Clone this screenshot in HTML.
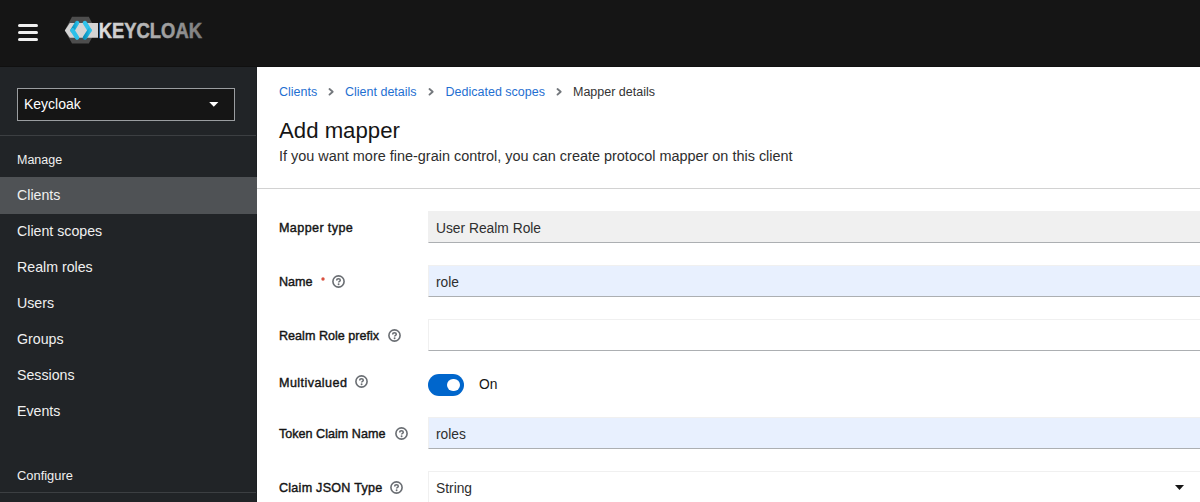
<!DOCTYPE html>
<html><head><meta charset="utf-8">
<style>
*{box-sizing:border-box;margin:0;padding:0}
html,body{width:1200px;height:502px;overflow:hidden;background:#fff;font-family:"Liberation Sans",sans-serif;color:#151515}
.abs{position:absolute;white-space:nowrap}
#hdr{position:absolute;left:0;top:0;width:1200px;height:67px;background:#151515;border-bottom:1px solid #101010}
.bar{position:absolute;left:18px;width:20px;height:3px;border-radius:1.5px;background:#f0f0f0}
#side{position:absolute;left:0;top:67px;width:257px;height:435px;background:#212427;border-right:1px solid #1d2023}
#realm{position:absolute;left:17px;top:88px;width:218px;height:33px;border:1px solid #9a9da0;background:#151515}
.nav{position:absolute;left:17px;color:#f0f0f0;font-size:14.2px}
.sect{position:absolute;left:17px;color:#f0f0f0;font-size:12.5px}
#main{position:absolute;left:257px;top:67px;width:943px;height:435px;background:#fff}
.bc{position:absolute;font-size:12.5px;color:#1f6fd1;top:0}
.lbl{position:absolute;left:279px;font-weight:normal;font-size:12.6px;color:#151515;-webkit-text-stroke:0.4px #151515}
.inp{position:absolute;left:428px;width:800px;height:32px;border:1px solid #f0f0f0;border-bottom-color:#acafb2}
.val{position:absolute;left:436px;font-size:13.8px;color:#2e2e2e}
.help{position:absolute;width:13px;height:13px}
</style></head><body>
<div id="hdr">
  <div class="bar" style="top:24px"></div>
  <div class="bar" style="top:31px"></div>
  <div class="bar" style="top:38px"></div>
  <svg class="abs" style="left:60px;top:10px" width="150" height="40" viewBox="60 10 150 40">
    <defs>
      <linearGradient id="tg" x1="0" x2="1" y1="0" y2="0">
        <stop offset="0" stop-color="#e0e0e0"/>
        <stop offset="1" stop-color="#7c7c7c"/>
      </linearGradient>
      <linearGradient id="cd" x1="-0.2" x2="1.2" y1="0" y2="0"><stop offset="0" stop-color="#0a8db6"/><stop offset="0.5" stop-color="#12a6d2"/><stop offset="1" stop-color="#2ec0ea"/></linearGradient>
    </defs>
    <polygon points="64.8,30.5 72,16.8 88.8,16.8 96,30.5 88.8,43.6 72,43.6" fill="#4d4d4d"/>
    <polygon points="64.8,30.5 69.8,23 98,23 98,37.8 69.8,37.8" fill="#d4d4d4"/>
    <g stroke-linecap="round" stroke-width="4.3" fill="none">
    <path d="M77.1,22.9 L72.5,30.3" stroke="url(#cd)"/>
    <path d="M72.5,30.3 L77.1,37.7" stroke="#2cc0ea"/>
    <path d="M84.9,22.9 L89.6,30.3" stroke="#30c3eb"/>
    <path d="M89.6,30.3 L84.9,37.7" stroke="url(#cd)"/>
    </g>
    <text x="98.7" y="37.5" font-family="Liberation Sans" font-weight="bold" font-size="21.4" textLength="103.3" lengthAdjust="spacingAndGlyphs" fill="url(#tg)" stroke="url(#tg)" stroke-width="0.5">KEYCLOAK</text>
  </svg>
</div>
<div id="side"></div>
<div id="realm"></div>
<div class="abs" style="left:24px;top:96px;color:#fff;font-size:14px">Keycloak</div>
<svg class="abs" style="left:209px;top:101.8px" width="10" height="6" viewBox="0 0 10 6"><polygon points="0.2,0 9.4,0 4.8,4.8" fill="#fff"/></svg>
<div class="abs" style="left:0;top:135px;width:256px;height:1px;background:#3c3f42"></div>
<div class="abs sect" style="top:153px">Manage</div>
<div class="abs" style="left:0;top:177px;width:257px;height:36.6px;background:#4f5255"></div>
<div class="abs nav" style="top:187px">Clients</div>
<div class="abs nav" style="top:223px">Client scopes</div>
<div class="abs nav" style="top:259px">Realm roles</div>
<div class="abs nav" style="top:295px">Users</div>
<div class="abs nav" style="top:331px">Groups</div>
<div class="abs nav" style="top:367px">Sessions</div>
<div class="abs nav" style="top:403px">Events</div>
<div class="abs sect" style="top:467.6px;font-size:12.9px">Configure</div>
<div class="abs" style="left:0;top:492px;width:256px;height:1px;background:#3c3f42"></div>

<div id="main"></div>
<svg class="abs" style="left:327.5px;top:87px" width="7" height="10" viewBox="0 0 7 10"><polyline points="1.5,2.0 4.7,4.7 1.5,7.6" fill="none" stroke="#73777c" stroke-width="1.9" stroke-linecap="round" stroke-linejoin="round"/></svg><svg class="abs" style="left:428.3px;top:87px" width="7" height="10" viewBox="0 0 7 10"><polyline points="1.5,2.0 4.7,4.7 1.5,7.6" fill="none" stroke="#73777c" stroke-width="1.9" stroke-linecap="round" stroke-linejoin="round"/></svg><svg class="abs" style="left:555.5px;top:87px" width="7" height="10" viewBox="0 0 7 10"><polyline points="1.5,2.0 4.7,4.7 1.5,7.6" fill="none" stroke="#73777c" stroke-width="1.9" stroke-linecap="round" stroke-linejoin="round"/></svg>
<div class="abs bc" style="left:279px;top:85px">Clients</div>
<div class="abs bc" style="left:345px;top:85px">Client details</div>
<div class="abs bc" style="left:445.6px;top:85px">Dedicated scopes</div>
<div class="abs bc" style="left:573px;top:85px;color:#333">Mapper details</div>
<div class="abs" style="left:279px;top:118px;font-size:22.2px">Add mapper</div>
<div class="abs" style="left:279px;top:148px;font-size:14.45px;color:#2e2e2e">If you want more fine-grain control, you can create protocol mapper on this client</div>
<div class="abs" style="left:257px;top:188px;width:943px;height:1px;background:#d2d2d2"></div>

<div class="abs lbl" style="top:220.7px;letter-spacing:0.38px">Mapper type</div>
<div class="inp" style="top:211px;background:#f0f0f0"></div>
<div class="abs val" style="top:220.5px">User Realm Role</div>

<div class="abs lbl" style="top:274.7px">Name</div>
<div class="inp" style="top:265px;background:#e8f0fe"></div>
<div class="abs val" style="top:274.5px">role</div>

<div class="abs lbl" style="top:329.2px">Realm Role prefix</div>
<div class="inp" style="top:319px;background:#fff"></div>

<div class="abs lbl" style="top:375.7px;letter-spacing:0.42px">Multivalued</div>
<div class="abs" style="left:428px;top:374px;width:36px;height:22px;border-radius:11px;background:#0066cc"></div>
<div class="abs" style="left:447px;top:378.5px;width:12.5px;height:12.5px;border-radius:50%;background:#fff"></div>
<div class="abs val" style="left:479px;top:377px;color:#151515">On</div>

<div class="abs lbl" style="top:427.2px">Token Claim Name</div>
<div class="inp" style="top:417px;background:#e8f0fe"></div>
<div class="abs val" style="top:426.5px">roles</div>

<div class="abs lbl" style="top:480.7px;letter-spacing:0.24px">Claim JSON Type</div>
<div class="inp" style="top:471px;background:#fff"></div>
<div class="abs val" style="top:480.5px">String</div>
<svg class="abs" style="left:1175px;top:484.5px" width="9" height="5" viewBox="0 0 9 5"><polygon points="0,0 9,0 4.5,5" fill="#151515"/></svg>
<svg class="help abs" style="left:332.2px;top:274.7px" width="13" height="13" viewBox="0 0 13 13"><circle cx="6.5" cy="6.5" r="5.6" fill="none" stroke="#6a6e73" stroke-width="1.6"/><path d="M4.7 5.4 C4.7 4.3 5.5 3.7 6.5 3.7 C7.6 3.7 8.3 4.3 8.3 5.2 C8.3 6.3 6.6 6.4 6.6 7.6" fill="none" stroke="#6a6e73" stroke-width="1.5"/><circle cx="6.6" cy="9.2" r="0.95" fill="#6a6e73"/></svg><svg class="help abs" style="left:388.0px;top:329.0px" width="13" height="13" viewBox="0 0 13 13"><circle cx="6.5" cy="6.5" r="5.6" fill="none" stroke="#6a6e73" stroke-width="1.6"/><path d="M4.7 5.4 C4.7 4.3 5.5 3.7 6.5 3.7 C7.6 3.7 8.3 4.3 8.3 5.2 C8.3 6.3 6.6 6.4 6.6 7.6" fill="none" stroke="#6a6e73" stroke-width="1.5"/><circle cx="6.6" cy="9.2" r="0.95" fill="#6a6e73"/></svg><svg class="help abs" style="left:354.8px;top:375.2px" width="13" height="13" viewBox="0 0 13 13"><circle cx="6.5" cy="6.5" r="5.6" fill="none" stroke="#6a6e73" stroke-width="1.6"/><path d="M4.7 5.4 C4.7 4.3 5.5 3.7 6.5 3.7 C7.6 3.7 8.3 4.3 8.3 5.2 C8.3 6.3 6.6 6.4 6.6 7.6" fill="none" stroke="#6a6e73" stroke-width="1.5"/><circle cx="6.6" cy="9.2" r="0.95" fill="#6a6e73"/></svg><svg class="help abs" style="left:394.5px;top:426.9px" width="13" height="13" viewBox="0 0 13 13"><circle cx="6.5" cy="6.5" r="5.6" fill="none" stroke="#6a6e73" stroke-width="1.6"/><path d="M4.7 5.4 C4.7 4.3 5.5 3.7 6.5 3.7 C7.6 3.7 8.3 4.3 8.3 5.2 C8.3 6.3 6.6 6.4 6.6 7.6" fill="none" stroke="#6a6e73" stroke-width="1.5"/><circle cx="6.6" cy="9.2" r="0.95" fill="#6a6e73"/></svg><svg class="help abs" style="left:390.1px;top:480.8px" width="13" height="13" viewBox="0 0 13 13"><circle cx="6.5" cy="6.5" r="5.6" fill="none" stroke="#6a6e73" stroke-width="1.6"/><path d="M4.7 5.4 C4.7 4.3 5.5 3.7 6.5 3.7 C7.6 3.7 8.3 4.3 8.3 5.2 C8.3 6.3 6.6 6.4 6.6 7.6" fill="none" stroke="#6a6e73" stroke-width="1.5"/><circle cx="6.6" cy="9.2" r="0.95" fill="#6a6e73"/></svg><div class="abs" style="left:320.5px;top:277px;width:3.5px;height:3.8px;"><svg width="4" height="4" viewBox="0 0 4 4" style="display:block"><circle cx="2" cy="2" r="1.7" fill="#d9503f"/></svg></div>
</body></html>
